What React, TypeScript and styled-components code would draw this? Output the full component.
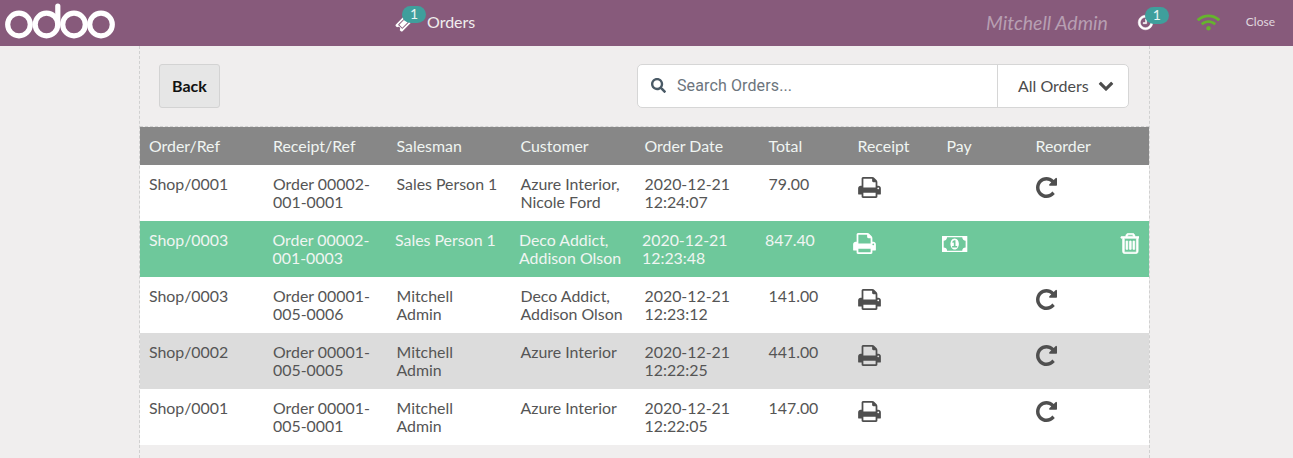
import React from 'react';
import styled, { createGlobalStyle } from 'styled-components';
import { FaSearch, FaWifi } from 'react-icons/fa';

const GlobalStyle = createGlobalStyle`
  html, body {
    margin: 0;
    height: 100%;
    overflow: hidden;
    background: #f0eeee;
    font-family: Lato, "Liberation Sans", sans-serif;
  }
`;

const Page = styled.div`
  width: 1293px;
  height: 458px;
  display: flex;
  flex-direction: column;
  overflow: hidden;
`;

const TopBar = styled.header`
  height: 46px;
  flex: none;
  display: flex;
  align-items: center;
  background: #875a7b;
  color: #f0eeee;
`;

const LogoWrap = styled.div`
  width: 395px;
  height: 46px;
  padding-left: 3px;
  box-sizing: border-box;
`;

const OrdersTab = styled.div`
  display: flex;
  align-items: center;
  gap: 15px;
  font-size: 16px;
  flex: 1;
`;

const TabLabel = styled.span`
  margin-bottom: 4px;
`;

const IconWithBadge = styled.span`
  position: relative;
  display: inline-flex;
  width: 17px;
  height: 17px;
  align-items: center;
  justify-content: center;
  color: #fff;
`;

const Badge = styled.span<{ $left: number; $top: number }>`
  position: absolute;
  top: ${p => p.$top}px;
  left: ${p => p.$left}px;
  width: 24px;
  height: 17px;
  border-radius: 9px;
  background: #3f9f9c;
  color: #e8f4f3;
  font-size: 14px;
  line-height: 16px;
  text-align: center;
`;

const UserName = styled.div`
  font-size: 19.500px;
  font-style: italic;
  color: #b79fb2;
  margin: 0 29px 2px 0;
`;

const ClockSlot = styled(IconWithBadge)`
  margin: 0 43px 2px 0;
`;

const Wifi = styled.span`
  display: inline-flex;
  color: #66b32e;
  margin: 0 26px 2px 0;
`;

const CloseLabel = styled.span`
  font-size: 12px;
  color: #e0d8df;
  margin: 0 18px 4px 0;
`;

const Panel = styled.main`
  width: 1009px;
  margin-left: 139px;
  flex: 1;
  border-left: 1px dashed #d0d0d0;
  border-right: 1px dashed #d0d0d0;
`;

const Controls = styled.div`
  height: 81px;
  box-sizing: border-box;
  padding: 18px 20px 0 19px;
  display: flex;
  justify-content: space-between;
  align-items: flex-start;
  border-bottom: 1px dashed #d0d0d0;
`;

const BackButton = styled.button`
  width: 61px;
  height: 44px;
  padding: 0 0 2px;
  background: #e6e6e6;
  border: 1px solid #d3d3d3;
  border-radius: 3px;
  color: #111;
  font: 700 16px Lato, sans-serif;
`;

const SearchBox = styled.div`
  width: 492px;
  height: 44px;
  box-sizing: border-box;
  display: flex;
  align-items: center;
  background: #fff;
  border: 1px solid #d6d6d6;
  border-radius: 5px;
`;

const SearchField = styled.div`
  flex: 1;
  height: 100%;
  display: flex;
  align-items: center;
  gap: 11px;
  padding-left: 13px;
  padding-bottom: 2px;
  box-sizing: border-box;
  color: #4a5a66;
  font-size: 16px;
  font-family: Roboto, sans-serif;
  border-right: 1px solid #d6d6d6;
`;

const Placeholder = styled.span`
  color: #6c757d;
  letter-spacing: 0.12px;
`;

const Filter = styled.div`
  width: 130px;
  box-sizing: border-box;
  padding: 0 14px 2px 20px;
  display: flex;
  align-items: center;
  justify-content: space-between;
  font-size: 16px;
  color: #4c4c4c;
`;

const Row = styled.div<{ $tone?: 'head' | 'active' | 'muted'; $shift?: boolean }>`
  display: grid;
  grid-template-columns: ${p => (p.$shift ? '123.500px 122.500px 124px 123px 123px 88px 89px 89px 89px 1fr' : '124px 123.500px 124px 124px 124px 89px 89px 89px 85px 1fr')};
  box-sizing: border-box;
  height: ${p => (p.$tone === 'head' ? 38 : 56)}px;
  padding: 10px 0 0 9px;
  font-size: 15.900px;
  line-height: 18px;
  color: ${p => (p.$tone === 'head' || p.$tone === 'active' ? '#f0f5f2' : '#555')};
  background: ${p =>
    p.$tone === 'head' ? '#878787' : p.$tone === 'active' ? '#6ec89b' : p.$tone === 'muted' ? '#dcdcdc' : '#fff'};
`;

const IconCell = styled.div<{ $tone?: string; $top?: number }>`
  padding-top: ${p => p.$top ?? 2}px;
  color: ${p => (p.$tone === 'active' ? '#fff' : '#4f4f4f')};
  line-height: 0;
`;

const Glyph = styled.svg<{ $width: number; $height: number; $bold?: boolean }>`
  display: block;
  width: ${p => p.$width}px;
  height: ${p => p.$height}px;
  fill: currentColor;
  stroke: ${p => (p.$bold ? 'currentColor' : 'none')};
  stroke-width: ${p => (p.$bold ? 50 : 0)};
`;

type GlyphProps = { d: string; box?: string; width?: number; height?: number; bold?: boolean };

const FaGlyph = ({ d, box = '0 0 1792 1792', width = 24, height = 24, bold }: GlyphProps) => (
  <Glyph viewBox={box} $width={width} $height={height} $bold={bold}>
    <path d={d} />
  </Glyph>
);

const PRINT = 'M448 1536h896v-256h-896v256zm0-640h896v-384h-160q-40 0-68-28t-28-68v-160h-640v640zm1152 64q0-26-19-45t-45-19-45 19-19 45 19 45 45 19 45-19 19-45zm128 0v416q0 13-9.500 22.500t-22.500 9.500h-224v160q0 40-28 68t-68 28h-960q-40 0-68-28t-28-68v-160h-224q-13 0-22.500-9.500t-9.500-22.500v-416q0-79 56.500-135.500t135.500-56.500h64v-544q0-40 28-68t68-28h672q40 0 88 20t76 48l152 152q28 28 48 76t20 88v256h64q79 0 135.500 56.500t56.500 135.500z';
const REPEAT = 'M1664 256v448q0 26-19 45t-45 19h-448q-42 0-59-40-17-39 14-69l138-138q-148-137-349-137-104 0-198.500 40.500t-163.500 109.500-109.500 163.500-40.500 198.500 40.500 198.500 109.500 163.500 163.500 109.500 198.500 40.500q119 0 225-52t179-147q7-10 23-12 14 0 25 9l137 138q9 8 9.500 20.500t-7.500 22.500q-109 132-264 204.500t-327 72.500q-156 0-298-61t-245-164-164-245-61-298 61-298 164-245 245-164 298-61q147 0 284.500 55.500t244.500 156.500l130-129q29-31 70-14 39 17 39 59z';
const TRASH = 'M704 736v576q0 14-9 23t-23 9h-64q-14 0-23-9t-9-23v-576q0-14 9-23t23-9h64q14 0 23 9t9 23zm256 0v576q0 14-9 23t-23 9h-64q-14 0-23-9t-9-23v-576q0-14 9-23t23-9h64q14 0 23 9t9 23zm256 0v576q0 14-9 23t-23 9h-64q-14 0-23-9t-9-23v-576q0-14 9-23t23-9h64q14 0 23 9t9 23zm128 724v-948h-896v948q0 22 7 40.500t14.500 27 10.500 8.500h832q3 0 10.500-8.500t14.500-27 7-40.500zm-672-1076h448l-48-117q-7-9-17-11h-317q-10 2-17 11zm928 32v64q0 14-9 23t-23 9h-96v948q0 83-47 143.500t-113 60.500h-832q-66 0-113-58.500t-47-141.500v-952h-96q-14 0-23-9t-9-23v-64q0-14 9-23t23-9h309l70-167q15-37 54-63t79-26h320q40 0 79 26t54 63l70 167h309q14 0 23 9t9 23z';
const MONEY = 'M768 1152h384v-96h-128v-448h-114l-148 137 77 80q42-37 55-57h2v288h-128v96zm512-256q0 70-21 142t-59.500 134-101 101-138.500 39-138.500-39-101-101-59.500-134-21-142 21-142 59.500-134 101-101 138.500-39 138.500 39 101 101 59.500 134 21 142zm512 256v-512q-106 0-181-75t-75-181h-1152q0 106-75 181t-181 75v512q106 0 181 75t75 181h1152q0-106 75-181t181-75zm128-832v1152q0 26-19 45t-45 19h-1792q-26 0-45-19t-19-45v-1152q0-26 19-45t45-19h1792q26 0 45 19t19 45z';
const TICKET = 'M1024 452l316 316-572 572-316-316zm-211 979l618-618q19-19 19-45t-19-45l-362-362q-18-18-45-18t-45 18l-618 618q-19 19-19 45t19 45l362 362q18 18 45 18t45-18zm889-637l-907 908q-37 37-90.500 37t-90.500-37l-126-126q56-56 56-136t-56-136-136-56-136 56l-125-126q-37-37-37-90.500t37-90.500l907-906q37-37 90.500-37t90.500 37l125 125q-56 56-56 136t56 136 136 56 136-56l126 125q37 37 37 90.500t-37 90.500z';
const CLOCK = 'M1024 544v448q0 14-9 23t-23 9h-320q-14 0-23-9t-9-23v-64q0-14 9-23t23-9h224v-352q0-14 9-23t23-9h64q14 0 23 9t9 23zm416 352q0-148-73-273t-198-198-273-73-273 73-198 198-73 273 73 273 198 198 273 73 273-73 198-198 73-273zm224 0q0 209-103 385.500t-279.500 279.500-385.500 103-385.500-103-279.500-279.500-103-385.500 103-385.500 279.500-279.500 385.500-103 385.500 103 279.500 279.500 103 385.500z';
const CHEVRON = 'M1683 808l-742 741q-19 19-45 19t-45-19l-742-741q-19-19-19-45.500t19-45.500l166-165q19-19 45-19t45 19l531 531 531-531q19-19 45-19t45 19l166 165q19 19 19 45.500t-19 45.500z';

type Order = {
  ref: string;
  receipt: string[];
  salesman: string[];
  customer: string[];
  date: string[];
  total: string;
  tone?: 'active' | 'muted';
};

const orders: Order[] = [
  { ref: 'Shop/0001', receipt: ['Order 00002-', '001-0001'], salesman: ['Sales Person 1'], customer: ['Azure Interior,', 'Nicole Ford'], date: ['2020-12-21', '12:24:07'], total: '79.00' },
  { ref: 'Shop/0003', receipt: ['Order 00002-', '001-0003'], salesman: ['Sales Person 1'], customer: ['Deco Addict,', 'Addison Olson'], date: ['2020-12-21', '12:23:48'], total: '847.40', tone: 'active' },
  { ref: 'Shop/0003', receipt: ['Order 00001-', '005-0006'], salesman: ['Mitchell', 'Admin'], customer: ['Deco Addict,', 'Addison Olson'], date: ['2020-12-21', '12:23:12'], total: '141.00' },
  { ref: 'Shop/0002', receipt: ['Order 00001-', '005-0005'], salesman: ['Mitchell', 'Admin'], customer: ['Azure Interior'], date: ['2020-12-21', '12:22:25'], total: '441.00', tone: 'muted' },
  { ref: 'Shop/0001', receipt: ['Order 00001-', '005-0001'], salesman: ['Mitchell', 'Admin'], customer: ['Azure Interior'], date: ['2020-12-21', '12:22:05'], total: '147.00' },
];

const headings = ['Order/Ref', 'Receipt/Ref', 'Salesman', 'Customer', 'Order Date', 'Total', 'Receipt', 'Pay', 'Reorder'];

const Lines = ({ lines }: { lines: string[] }) => (
  <div>
    {lines.map(line => (
      <div key={line}>{line}</div>
    ))}
  </div>
);

const OdooLogo = () => (
  <svg width="115" height="46" viewBox="0 0 115 46" fill="none" stroke="#fff" strokeWidth="5.200">
    <circle cx="16" cy="24.500" r="11.300" />
    <circle cx="43.500" cy="24.500" r="11.300" />
    <path d="M54.800 24.500V6" strokeLinecap="round" />
    <circle cx="71" cy="24.500" r="11.300" />
    <circle cx="98" cy="24.500" r="11.300" />
  </svg>
);

const App: React.FC = () => (
  <Page>
    <GlobalStyle />
    <TopBar>
      <LogoWrap>
        <OdooLogo />
      </LogoWrap>
      <OrdersTab>
        <IconWithBadge>
          <FaGlyph d={TICKET} width={19} height={19} />
          <Badge $left={7} $top={-9}>1</Badge>
        </IconWithBadge>
        <TabLabel>Orders</TabLabel>
      </OrdersTab>
      <UserName>Mitchell Admin</UserName>
      <ClockSlot>
        <FaGlyph d={CLOCK} width={19} height={19} bold />
        <Badge $left={8} $top={-7}>1</Badge>
      </ClockSlot>
      <Wifi>
        <FaWifi size={23} />
      </Wifi>
      <CloseLabel>Close</CloseLabel>
    </TopBar>
    <Panel>
      <Controls>
        <BackButton>Back</BackButton>
        <SearchBox>
          <SearchField>
            <FaSearch size={15} />
            <Placeholder>Search Orders...</Placeholder>
          </SearchField>
          <Filter>
            All Orders
            <FaGlyph d={CHEVRON} width={16} height={16} />
          </Filter>
        </SearchBox>
      </Controls>
      <Row $tone="head">
        {headings.map(h => (
          <div key={h}>{h}</div>
        ))}
      </Row>
      {orders.map(order => {
        const active = order.tone === 'active';
        return (
          <Row key={order.receipt.join('')} $tone={order.tone} $shift={active}>
            <div>{order.ref}</div>
            <Lines lines={order.receipt} />
            <Lines lines={order.salesman} />
            <Lines lines={order.customer} />
            <Lines lines={order.date} />
            <div>{order.total}</div>
            <IconCell $tone={order.tone}>
              <FaGlyph d={PRINT} box="64 128 1664 1536" width={23} height={21} />
            </IconCell>
            <IconCell $tone={order.tone} $top={5}>
              {active && <FaGlyph d={MONEY} box="0 320 2048 1152" width={27} height={16} />}
            </IconCell>
            <IconCell $tone={order.tone}>{!active && <FaGlyph d={REPEAT} box="128 128 1536 1536" width={21} height={21} />}</IconCell>
            <IconCell $tone={order.tone}>{active && <FaGlyph d={TRASH} box="128 128 1408 1536" width={19} height={21} bold />}</IconCell>
          </Row>
        );
      })}
    </Panel>
  </Page>
);

export default App;
